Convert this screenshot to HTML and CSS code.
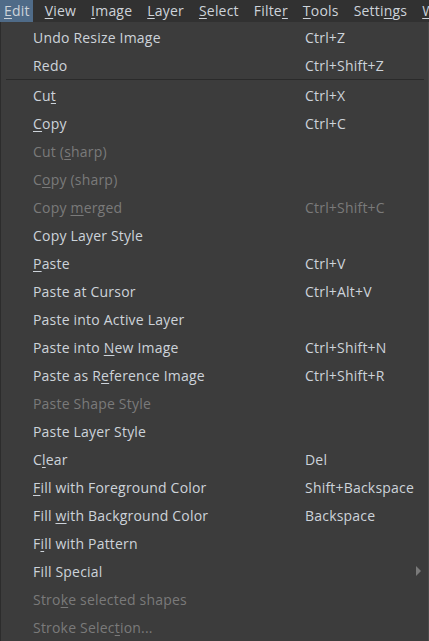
FILE: index.html
```html
<!DOCTYPE html>
<html lang="en">
<head>
  <meta charset="UTF-8">
  <meta name="viewport" content="width=device-width, initial-scale=1.0">
  <title>Edit menu</title>
  <link rel="stylesheet" href="styles.css">
</head>
<body>
  <div class="menubar">
    <span class="menu-title active"><u>E</u>dit</span>
    <span class="menu-title"><u>V</u>iew</span>
    <span class="menu-title"><u>I</u>mage</span>
    <span class="menu-title"><u>L</u>ayer</span>
    <span class="menu-title"><u>S</u>elect</span>
    <span class="menu-title">Filte<u>r</u></span>
    <span class="menu-title"><u>T</u>ools</span>
    <span class="menu-title">Setti<u>n</u>gs</span>
    <span class="menu-title"><u>W</u>indow</span>
  </div>

  <div class="popup">
    <div class="item"><span>Undo Resize Image</span><span>Ctrl+Z</span></div>
    <div class="item"><span>Redo</span><span>Ctrl+Shift+Z</span></div>
    <div class="separator"></div>
    <div class="item"><span>Cu<u>t</u></span><span>Ctrl+X</span></div>
    <div class="item"><span><u>C</u>opy</span><span>Ctrl+C</span></div>
    <div class="item disabled"><span>Cut (<u>s</u>harp)</span><span></span></div>
    <div class="item disabled"><span>C<u>o</u>py (sharp)</span><span></span></div>
    <div class="item disabled"><span>Copy <u>m</u>erged</span><span>Ctrl+Shift+C</span></div>
    <div class="item"><span>Copy Layer Style</span><span></span></div>
    <div class="item"><span><u>P</u>aste</span><span>Ctrl+V</span></div>
    <div class="item"><span>Paste at Cursor</span><span>Ctrl+Alt+V</span></div>
    <div class="item"><span>Paste into Active Layer</span><span></span></div>
    <div class="item"><span>Paste into <u>N</u>ew Image</span><span>Ctrl+Shift+N</span></div>
    <div class="item"><span>Paste as R<u>e</u>ference Image</span><span>Ctrl+Shift+R</span></div>
    <div class="item disabled"><span>Paste Shape Style</span><span></span></div>
    <div class="item"><span>Paste Layer Style</span><span></span></div>
    <div class="item"><span>C<u>l</u>ear</span><span>Del</span></div>
    <div class="item"><span><u>F</u>ill with Foreground Color</span><span>Shift+Backspace</span></div>
    <div class="item"><span>Fill <u>w</u>ith Background Color</span><span>Backspace</span></div>
    <div class="item"><span>F<u>i</u>ll with Pattern</span><span></span></div>
    <div class="item"><span>Fill Special</span><span></span><span class="arrow"></span></div>
    <div class="item disabled"><span>Stro<u>k</u>e selected shapes</span><span></span></div>
    <div class="item disabled"><span>Stroke Selec<u>t</u>ion...</span><span></span></div>
  </div>
</body>
</html>
```

FILE: styles.css
```css
body {
  margin: 0;
  background-color: #3c3c3c;
  font-family: "Open Sans", "Noto Sans", sans-serif;
  font-size: 14px;
  letter-spacing: 0.2px;
  color: #cdd3da;
  overflow: hidden;
}
u {
  text-underline-offset: 2px;
}
.menubar {
  display: flex;
  gap: 8px;
  height: 22px;
  background-color: #313131;
  white-space: nowrap;
  overflow: hidden;
}
.menu-title {
  display: flex;
  align-items: center;
  padding: 0 3px 1px 4px;
}
.menu-title.active {
  background-color: #4f6b88;
}
.popup {
  border-left: 1px solid #2c2c2c;
  border-right: 1px solid #4a4a4a;
  padding-top: 1px;
}
.item {
  display: grid;
  grid-template-columns: 272px 1fr 12px;
  align-items: center;
  height: 28px;
  padding-left: 32px;
  white-space: nowrap;
}
.item.disabled {
  color: #7a7a7a;
}
.separator {
  height: 1px;
  margin: 0 4px 1px 5px;
  background-color: #2a2a2a;
}
.arrow {
  width: 0;
  height: 0;
  border-top: 5px solid transparent;
  border-bottom: 5px solid transparent;
  border-left: 5px solid #7a7a7a;
}
```
